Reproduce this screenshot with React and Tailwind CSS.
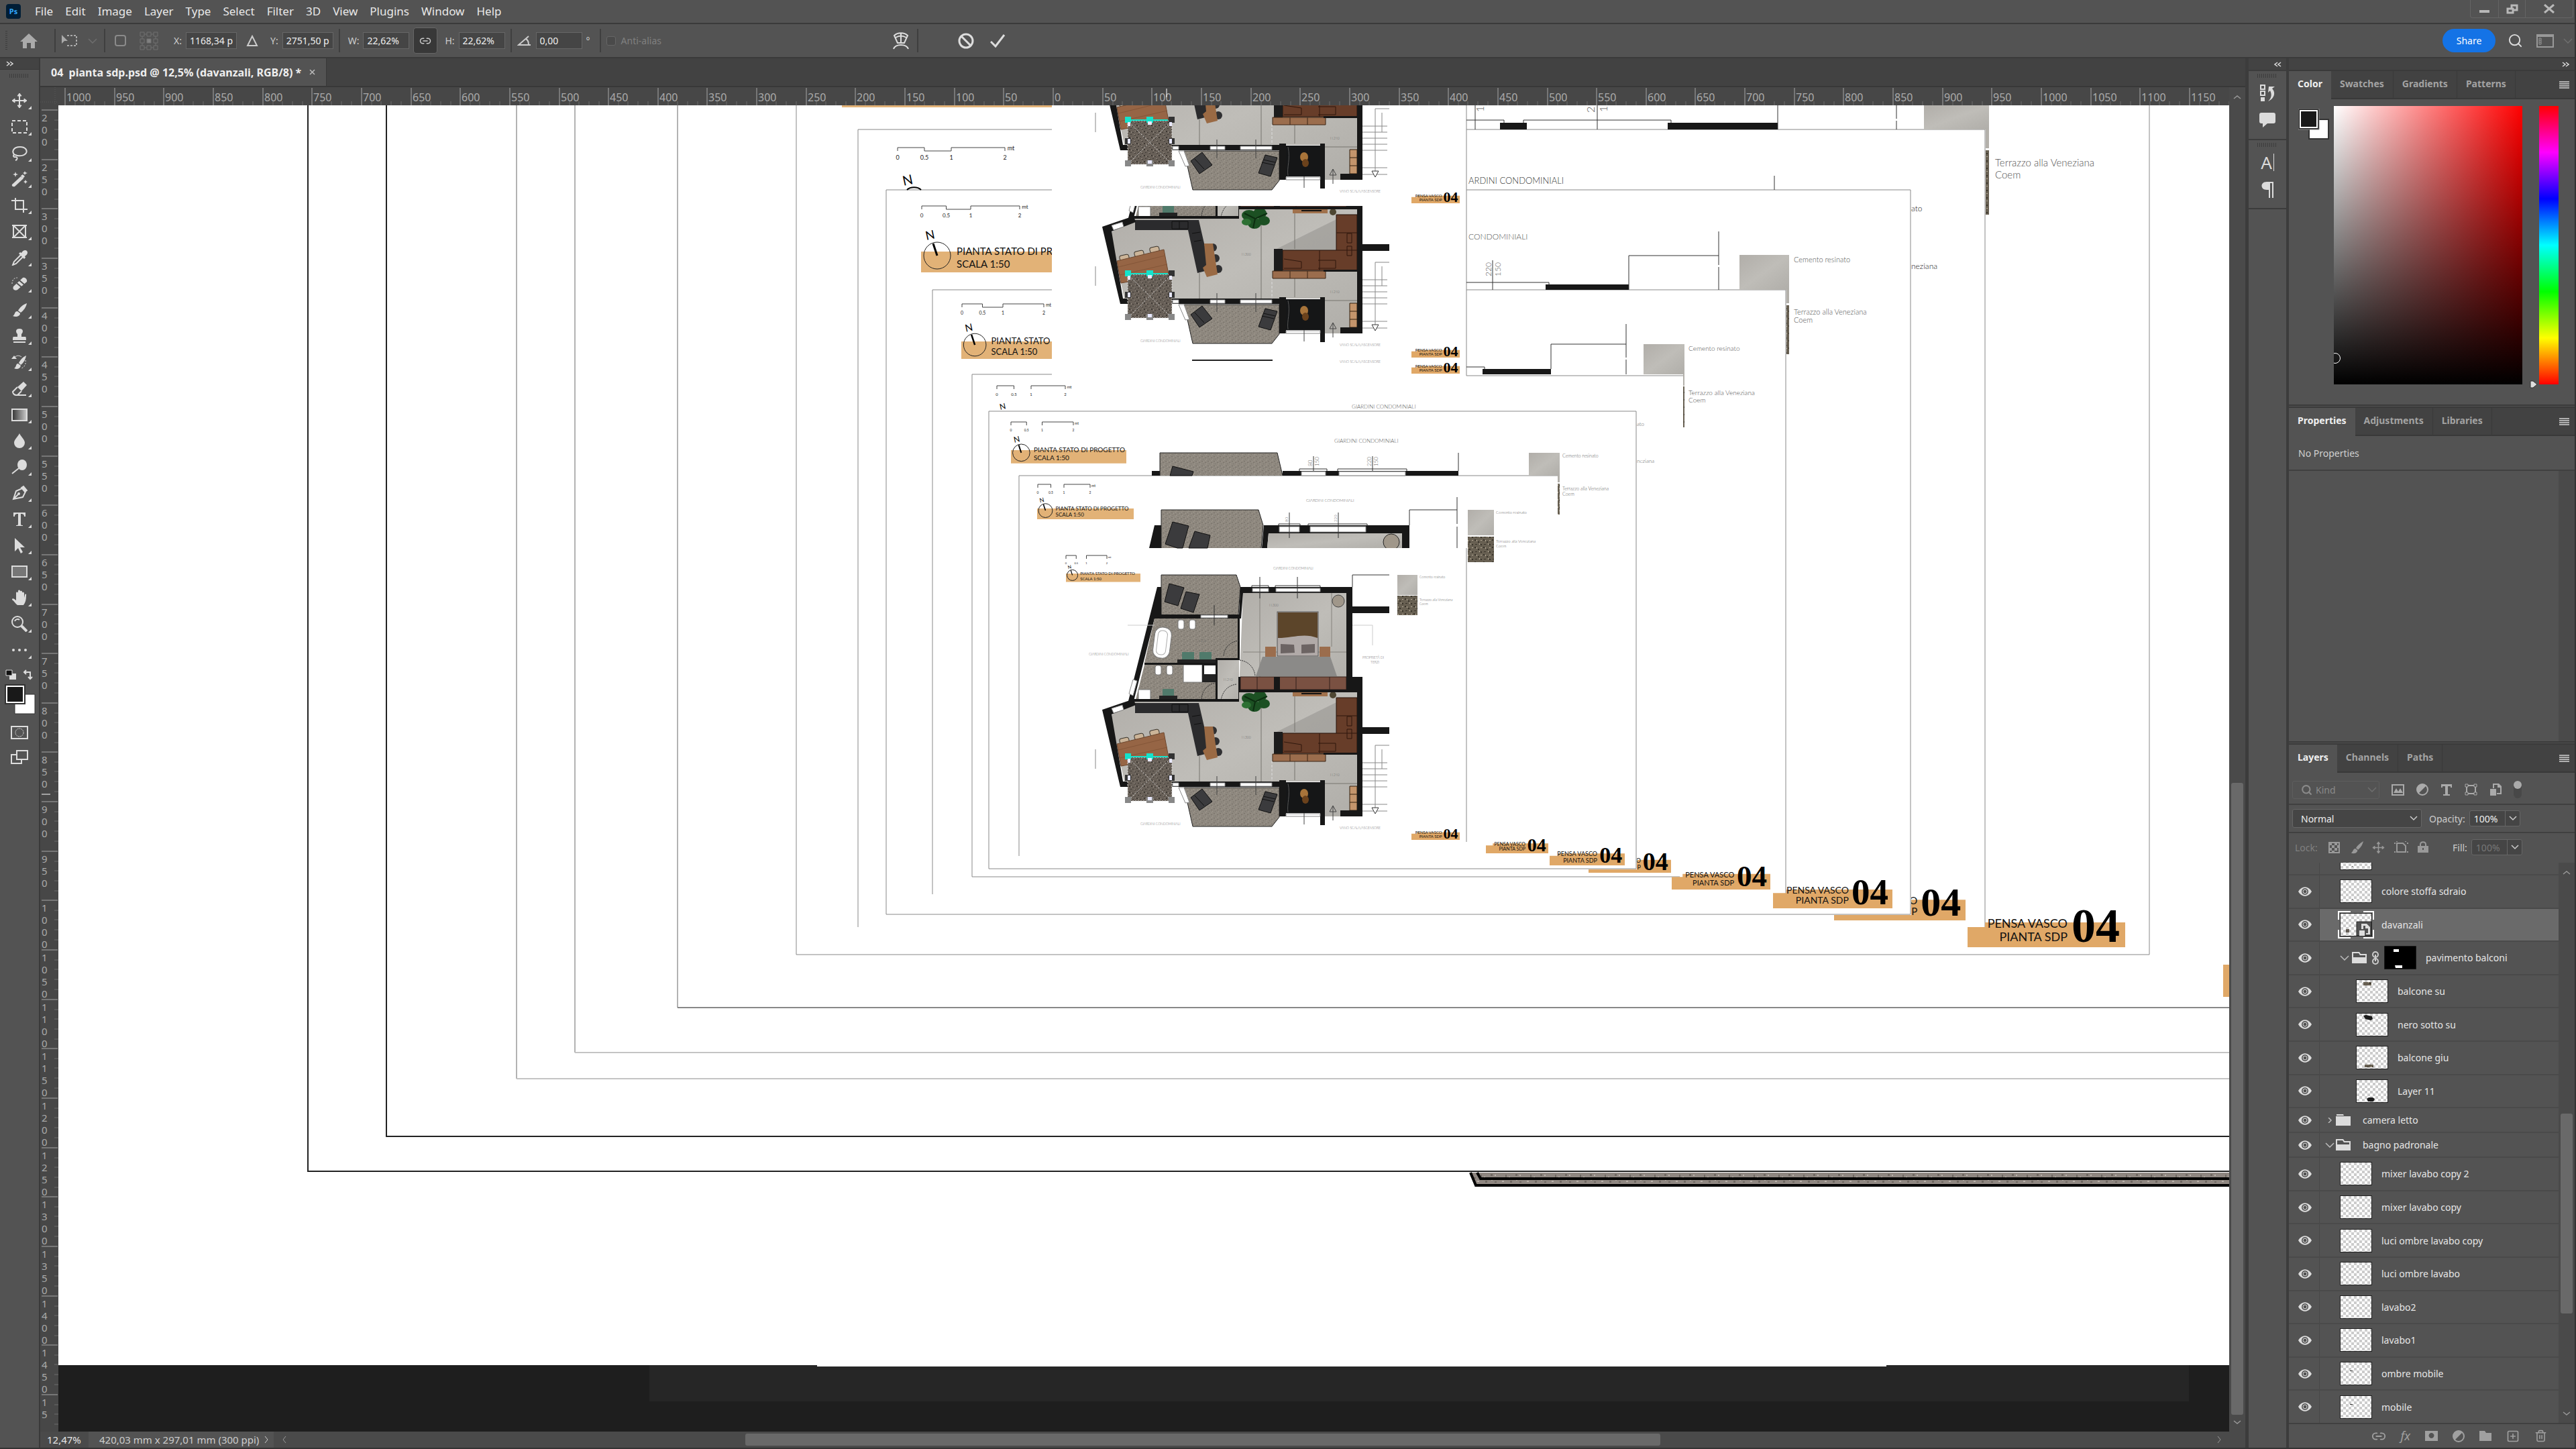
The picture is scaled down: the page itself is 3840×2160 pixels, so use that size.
import React from 'react';
import { Search, Link2, Trash2, SquarePlus } from 'lucide-react';

const MENUS = ['File', 'Edit', 'Image', 'Layer', 'Type', 'Select', 'Filter', '3D', 'View', 'Plugins', 'Window', 'Help'];

const TOOLS = [
  ['Move', <g key="i" fill="none" stroke="currentColor" strokeWidth="2"><path d="M12 3v18M3 12h18" /><path fill="currentColor" strokeWidth="1" d="M12 1l3 4H9zM12 23l3-4H9zM1 12l4-3v6zM23 12l-4-3v6z" /></g>],
  ['Marquee', <rect key="i" x="1" y="3" width="22" height="18" fill="none" stroke="currentColor" strokeWidth="2" strokeDasharray="5 3" />],
  ['Lasso', <path key="i" fill="none" stroke="currentColor" strokeWidth="2" d="M5 15C0 11 2 3 13 3c8 0 11 5 9 9-3 5-12 5-16 3-4-2-4 4 0 3 4 0 3 4 0 5" />],
  ['Object Selection', <g key="i" fill="currentColor"><path d="M1 20L14 8l4 3L5 23c-3 1-5-1-4-3z" /><path d="M14 7l3-2 3 3-3 3zM6 1l1 3 3 1-3 1-1 3-1-3-3-1 3-1zM20 0l1 2 3 1-3 1-1 2-1-2-2-1 2-1zM21 13l1 2 2 1-2 1-1 2-1-2-2-1 2-1z" /></g>],
  ['Crop', <path key="i" fill="none" stroke="currentColor" strokeWidth="2" d="M0 5h18v18M6 1v17h18" />],
  ['Frame', <path key="i" fill="none" stroke="currentColor" strokeWidth="2" d="M1 3h22M1 21h22M3 2v20M21 2v20M3 3l18 18M21 3L3 21" />],
  ['Eyedropper', <g key="i"><path fill="none" stroke="currentColor" strokeWidth="2" d="M14 8L4 18l-2 5 5-2 10-10" /><path fill="currentColor" d="M11 6l2-2 2 1c2-4 6-5 8-3s1 6-3 8l1 2-2 2z" /></g>],
  ['Healing Brush', <g key="i"><path fill="currentColor" d="M3 16L17 3c3-1 7 2 6 6L9 21c-4 2-8-1-6-5z" /><path stroke="#535353" strokeWidth="2" d="M8 11l7 6M12 7l7 6" /><path fill="none" stroke="currentColor" strokeDasharray="2 2" d="M1 12c0-6 3-9 8-9" /></g>],
  ['Brush', <path key="i" fill="currentColor" d="M23 2C17 4 12 9 10 13l4 3c4-3 8-8 9-14zM9 14c-5 0-3 5-7 7 4 2 11 1 11-4z" />],
  ['Clone Stamp', <path key="i" fill="currentColor" d="M12 1c-6 0-6 5-3 8v4H3c-1 0-1 4-1 5h20c0-1 0-5-1-5h-6V9c3-3 3-8-3-8zM3 20h18v2H3z" />],
  ['History Brush', <g key="i"><path fill="currentColor" d="M22 2C17 4 13 9 11 13l3 3c4-3 7-8 8-14zM10 14c-4 0-2 5-6 7 4 2 9 1 10-4zM0 7l4-5 4 5z" /><path fill="none" stroke="currentColor" d="M4 6c2-4 7-5 11-2" /><path fill="none" stroke="currentColor" strokeDasharray="2 2" d="M21 9c1 5-1 10-6 12" /></g>],
  ['Eraser', <g key="i"><path fill="currentColor" d="M9 10l9-8 5 5-8 9z" /><path fill="none" stroke="currentColor" strokeWidth="2" d="M9 10l-7 7c0 3 3 5 5 5h15M15 16l-6 6" /></g>],
  ['Gradient', <g key="i"><defs><linearGradient id="toolGradient"><stop offset="0" stopColor="#333" /><stop offset="1" stopColor="#ccc" /></linearGradient></defs><rect x="1" y="4" width="22" height="17" fill="url(#toolGradient)" stroke="currentColor" strokeWidth="2" /></g>],
  ['Blur', <path key="i" fill="currentColor" d="M12 1c2 5 8 9 8 14a8 8 0 0 1-16 0C4 10 10 6 12 1z" />],
  ['Dodge', <g key="i"><ellipse cx="16" cy="9" rx="7" ry="8" fill="currentColor" /><path stroke="currentColor" strokeWidth="2" d="M11 14L1 22" /></g>],
  ['Pen', <g key="i" fill="none" stroke="currentColor" strokeWidth="2"><path d="M3 21L7 9l9-4 5 5-4 8zM3 21l7-7" /><path fill="currentColor" d="M15 4l3-2 5 6-3 2z" /><circle cx="11" cy="13" r="1" /></g>],
  ['Type', <path key="i" fill="currentColor" d="M3 2h18v6h-2c0-3-1-4-5-4v15c0 2 1 2 3 2v1H7v-1c2 0 3 0 3-2V4C6 4 5 5 5 8H3z" />],
  ['Path Selection', <path key="i" fill="currentColor" d="M5 1v20l5-5 4 8 3-2-4-7h7z" />],
  ['Rectangle', <rect key="i" x="1" y="4" width="22" height="16" fill="#777" stroke="currentColor" strokeWidth="2" />],
  ['Hand', <path key="i" fill="currentColor" d="M9 23c-3-2-5-6-8-8 0-3 3-2 6 1V5c0-2 3-2 3 0V2c0-2 3-2 3 0v1c0-2 3-1 3 0v2c0-2 3-1 3 0v7l1-4c0-2 3-2 2 1 0 6-1 10-4 14z" />],
  ['Zoom', <g key="i" fill="none" stroke="currentColor" strokeWidth="2"><circle cx="9" cy="9" r="8" /><path d="M5 8c1-3 5-4 7-2" /><path strokeWidth="4" d="M15 15l8 8" /></g>],
  ['Edit Toolbar', <g key="i" fill="currentColor"><circle cx="3" cy="12" r="2" /><circle cx="12" cy="12" r="2" /><circle cx="21" cy="12" r="2" /></g>],
];

const LAYERS = [
  { name: 'metallo', partial: true, mark: 'dot' },
  { name: 'colore stoffa sdraio', mark: 'dot' },
  { name: 'davanzali', active: true, mark: 'smart' },
  { name: 'pavimento balconi', mask: true },
  { name: 'balcone su', nested: true, mark: 'stoneTop' },
  { name: 'nero sotto su', nested: true, mark: 'blackTop' },
  { name: 'balcone giu', nested: true, mark: 'stoneBottom' },
  { name: 'Layer 11', nested: true, mark: 'blackBottom' },
  { name: 'camera letto', folder: 'closed' },
  { name: 'bagno padronale', folder: 'open' },
  { name: 'mixer lavabo copy 2' },
  { name: 'mixer lavabo copy' },
  { name: 'luci ombre lavabo copy' },
  { name: 'luci ombre lavabo' },
  { name: 'lavabo2' },
  { name: 'lavabo1' },
  { name: 'ombre mobile', mark: 'dash' },
  { name: 'mobile', mark: 'dash' },
];

const RULER_STEP = 73.65;

function Chevron({ d = 'M1 1l6 6 6-6', className = '' }) {
  return (
    <svg width="14" height="8" viewBox="0 0 14 8" className={className} fill="none" stroke="currentColor" strokeWidth="1.5">
      <path d={d} />
    </svg>
  );
}

function Gripper() {
  return <div className="h-[6px] w-[30px] bg-[repeating-linear-gradient(to_right,#3c3c3c_0_1px,transparent_1px_3px)]" />;
}

function Divider() {
  return <div className="h-[35px] w-[2px] shrink-0 bg-[#3f3f3f]" />;
}

function MenuBar() {
  return (
    <header className="flex h-[36px] shrink-0 items-center border-b-2 border-[#3a3a3a]">
      <span className="ml-[9px] flex h-[22px] w-[22px] items-center justify-center rounded-[4px] bg-[#001e36] text-[11px] font-bold text-[#31a8ff]">Ps</span>
      <nav className="ml-[21px] flex flex-1 gap-[18px] text-[17px] text-[#e8e8e8]">
        {MENUS.map((m) => <button key={m} type="button">{m}</button>)}
      </nav>
      <div className="mr-[2px] flex h-[27px] self-start rounded-b border border-t-0 border-[#646464] text-[#b8b8b8]">
        <button type="button" aria-label="Minimize" className="flex w-[42px] items-center justify-center border-r border-[#646464]">
          <span className="mt-[8px] h-[4px] w-[15px] bg-current" />
        </button>
        <button type="button" aria-label="Restore" className="flex w-[40px] items-center justify-center border-r border-[#646464]">
          <svg width="18" height="15" fill="none" stroke="currentColor" strokeWidth="3"><path d="M8 6V2h8v7h-5M2 7h8v6H2z" /></svg>
        </button>
        <button type="button" aria-label="Close" className="flex w-[70px] items-center justify-center">
          <svg width="16" height="14" stroke="currentColor" strokeWidth="3"><path d="M1 1l14 12M15 1L1 13" /></svg>
        </button>
      </div>
    </header>
  );
}

function Field({ label, value, width }) {
  return (
    <label className="flex items-center gap-[6px]">
      {label}
      <input defaultValue={value} className={`h-[25px] border border-[#666] bg-[#454545] px-[5px] text-[14px] text-[#eee] ${width}`} />
    </label>
  );
}

function OptionsBar() {
  return (
    <div className="flex h-[51px] shrink-0 items-center border-b-2 border-[#3a3a3a] text-[14px] text-[#ccc]">
      <div className="ml-[8px] h-[30px] w-[3px] bg-[repeating-linear-gradient(to_bottom,#3c3c3c_0_1px,transparent_1px_3px)]" />
      <button type="button" aria-label="Home" className="mr-[25px] ml-[19px] text-[#aaa]">
        <svg width="26" height="22" fill="currentColor"><path d="M13 0l13 12h-4v10h-6v-8h-6v8H4V12H0z" /></svg>
      </button>
      <Divider />
      <svg width="25" height="20" className="ml-[9px]" fill="none" stroke="#aaa" strokeWidth="2"><path d="M8 2h14v15H6" strokeDasharray="3 2" /><path fill="#aaa" stroke="none" d="M0 1l9 9H4l-4 4z" /></svg>
      <Chevron className="mr-[10px] ml-[14px] text-[#6e6e6e]" />
      <Divider />
      <input type="checkbox" aria-label="Toggle reference point" className="mr-[20px] ml-[14px] h-[17px] w-[17px] appearance-none rounded-[4px] border-2 border-[#8a8a8a]" />
      <svg width="28" height="28" className="mr-[23px]" fill="none" stroke="#707070">
        <path d="M1 1h6v6H1zM11 1h6v6h-6zM21 1h6v6h-6zM1 11h6v6H1zM21 11h6v6h-6zM1 21h6v6H1zM11 21h6v6h-6zM21 21h6v6h-6zM7 4h4M17 4h4M7 24h4M17 24h4M4 7v4M4 17v4M24 7v4M24 17v4" />
        <path fill="#808080" d="M11 11h6v6h-6z" />
      </svg>
      <Field label="X:" value="1168,34 p" width="w-[76px]" />
      <svg width="18" height="17" className="mr-[18px] ml-[14px]" fill="none" stroke="#ccc" strokeWidth="2"><path d="M9 2l7 14H2z" /></svg>
      <Field label="Y:" value="2751,50 p" width="w-[76px]" />
      <div className="mr-[12px] ml-[8px]"><Divider /></div>
      <Field label="W:" value="22,62%" width="w-[69px]" />
      <button type="button" aria-label="Link" className="mr-[11px] ml-[6px] flex h-[39px] w-[36px] items-center justify-center rounded border border-[#666] bg-[#383838]"><Link2 size={18} /></button>
      <Field label="H:" value="22,62%" width="w-[69px]" />
      <div className="mr-[8px] ml-[8px]"><Divider /></div>
      <Field label={<svg width="22" height="16" fill="none" stroke="#ccc" strokeWidth="2"><path d="M17 1L2 14h18M13 5c4 2 4 6 4 9" /></svg>} value="0,00" width="w-[69px]" />
      <span className="mr-[14px] ml-[6px]">°</span>
      <Divider />
      <label className="ml-[8px] flex items-center gap-[8px] text-[#808080]">
        <input type="checkbox" className="h-[14px] w-[14px] appearance-none rounded-[3px] border border-[#666] bg-[#4a4a4a]" />
        Anti-alias
      </label>
      <svg width="24" height="26" className="mr-[12px] ml-[345px]" fill="none" stroke="#ddd" strokeWidth="2"><path d="M7 16L2 5c5-5 15-5 20 0l-5 11zM12 1v15M4 8c5-3 11-3 16 0M1 25c3-8 19-8 22 0" /></svg>
      <Divider />
      <button type="button" aria-label="Cancel transform" className="ml-[59px]">
        <svg width="24" height="24" fill="none" stroke="#ddd" strokeWidth="3"><circle cx="12" cy="12" r="10" /><path d="M5 5l14 14" /></svg>
      </button>
      <button type="button" aria-label="Commit transform" className="ml-[24px]">
        <svg width="23" height="20" fill="none" stroke="#ddd" strokeWidth="3"><path d="M1 11l7 7L21 1" /></svg>
      </button>
      <button type="button" className="ml-auto h-[35px] w-[79px] rounded-full bg-[#1473e6] text-white">Share</button>
      <button type="button" aria-label="Search" className="ml-[18px] text-[#ddd]"><Search size={23} /></button>
      <svg width="26" height="20" className="ml-[20px]" fill="none" stroke="#999" strokeWidth="2"><path d="M1 1h24v18H1zM1 3h24" /><path strokeWidth="1" d="M4 6h3v9H4zM4 9h3M4 12h3" /></svg>
      <Chevron className="mr-[3px] ml-[14px] text-[#6e6e6e]" />
    </div>
  );
}

function Toolbar() {
  return (
    <aside className="flex w-[60px] shrink-0 flex-col border-r-2 border-[#3a3a3a] text-[#dcdcdc]">
      <div className="flex h-[17px] items-center border-b border-[#3a3a3a] bg-[#434343] pl-[9px]">
        <svg width="11" height="8" fill="none" stroke="currentColor" strokeWidth="1.5"><path d="M1 1l4 3-4 3M6 1l4 3-4 3" /></svg>
      </div>
      <div className="flex h-[26px] items-start justify-center pt-[6px]"><Gripper /></div>
      {TOOLS.map(([name, icon]) => (
        <button key={name} type="button" aria-label={name} className="flex h-[39px] items-center justify-center gap-[1px] pl-[6px]">
          <svg width="24" height="24" viewBox="0 0 24 24">{icon}</svg>
          <svg width="5" height="5" className="mt-[22px]" fill="currentColor"><path d="M5 0v5H0z" /></svg>
        </button>
      ))}
      <div className="flex h-[32px] items-center justify-between px-[8px] pt-[4px]">
        <svg width="17" height="16"><path fill="#ddd" d="M6 6h10v9H6z" /><path fill="#111" stroke="#ddd" d="M1 1h9v8H1z" /></svg>
        <svg width="16" height="16" fill="none" stroke="currentColor" strokeWidth="2"><path d="M2 4h9v10M5 1L2 4l3 3M8 11l3 3 3-3" /></svg>
      </div>
      <svg width="46" height="46" className="ml-[7px] shrink-0">
        <path fill="#fff" stroke="#333" d="M15 15h30v29H15z" />
        <path fill="#333" d="M0 0h31v30H0z" />
        <path fill="#191919" stroke="#fff" strokeWidth="2" d="M3 3h25v24H3z" />
      </svg>
      <button type="button" aria-label="Quick Mask" className="flex h-[46px] items-center justify-center pt-[6px]">
        <svg width="26" height="20" fill="none" stroke="currentColor" strokeWidth="2"><path d="M1 1h24v18H1z" /><circle cx="13" cy="10" r="6" strokeWidth="1" strokeDasharray="2 1" /></svg>
      </button>
      <button type="button" aria-label="Screen Mode" className="flex h-[33px] items-center justify-center">
        <svg width="26" height="22" fill="none" stroke="currentColor" strokeWidth="2"><path d="M9 1h16v13H9zM9 7H1v13h15v-6" /></svg>
      </button>
    </aside>
  );
}

function HorizontalRuler() {
  const marks = Array.from({ length: 44 }, (_, i) => i);
  return (
    <svg width="100%" height="27" className="block bg-[#474747]" fontSize="16" fill="#aaa">
      {marks.map((i) => {
        const x = Math.round(10 + i * RULER_STEP);
        return (
          <g key={i}>
            <path stroke="#777" strokeWidth="2" d={`M${x} 1v26`} />
            <path stroke="#6c6c6c" strokeWidth="1" d={`M${x + 15} 21v6M${x + 29} 21v6M${x + 44} 21v6M${x + 59} 21v6`} />
            <text x={x + 2} y="21">{Math.abs(1000 - i * 50)}</text>
          </g>
        );
      })}
      <path stroke="#fff" d="M1652 2v13" />
    </svg>
  );
}

function VerticalRuler() {
  const marks = Array.from({ length: 27 }, (_, i) => i);
  return (
    <svg width="27" height="100%" className="block shrink-0 bg-[#474747]" fontSize="15" fill="#aaa">
      <path fill="none" stroke="#5a5a5a" strokeDasharray="1 2" d="M0 22h27M22 0v27" />
      {marks.map((i) => {
        const y = Math.round(34 + i * RULER_STEP);
        const digits = String(200 + i * 50).split('').filter((_, n) => y + 17 + n * 18 < 2000);
        return (
          <g key={i}>
            <path stroke="#777" strokeWidth="2" d={`M2 ${y}h24`} />
            <path stroke="#6c6c6c" strokeWidth="1" d={`M21 ${y + 15}h6M21 ${y + 29}h6M21 ${y + 44}h6M21 ${y + 59}h6`} />
            {digits.map((c, n) => <text key={n} x="2" y={y + 17 + n * 18}>{c}</text>)}
          </g>
        );
      })}
      <path stroke="#fff" d="M2 1054h13" />
    </svg>
  );
}

// Title block with the sheet number, right and bottom are its far edges
function SheetTag({ right, bottom, width, lines = ['PENSA VASCO', 'PIANTA SDP'] }) {
  const k = width / 235;
  const small = Math.max(5, Math.round(18 * k));
  return (
    <g>
      <path fill="#e0a867" d={`M${right - width} ${bottom - 30 * k}H${right - width + 26 * k}V${bottom - 37 * k}H${right}V${bottom}H${right - width}z`} />
      <g textAnchor="end" fontFamily="Lato" fontSize={small} fill="#111">
        <text x={right - 86 * k} y={bottom - 29 * k}>{lines[0]}</text>
        <text x={right - 86 * k} y={bottom - 9 * k}>{lines[1]}</text>
      </g>
      <text x={right - 8 * k} y={bottom - 8 * k} textAnchor="end" fontFamily="Liberation Serif" fontWeight="700" fontSize={Math.round(72 * k)}>04</text>
    </g>
  );
}

function North({ x, y, size }) {
  return <text transform={`translate(${x} ${y}) rotate(-12)`} fontFamily="Lato" fontSize={size}>N</text>;
}

function PlanTitle({ x, y, width, k, size }) {
  return (
    <g>
      <path fill="#e2b277" d={`M${x} ${y}h${width}v${31 * k}h${-width}z`} />
      <circle cx={x + 24 * k} cy={y + 6 * k} r={20 * k} fill="none" stroke="#222" />
      <path stroke="#000" strokeWidth={Math.max(1, 3 * k)} d={`M${x + 24 * k} ${y + 6 * k}l${-6 * k} ${-18 * k}`} />
      <North x={x + 8 * k} y={y - 17 * k} size={Math.round(18 * k)} />
      <g fontFamily="Lato" fontSize={size} fill="#111">
        <text x={x + 53 * k} y={y + 5 * k}>PIANTA STATO DI PROGETTO</text>
        <text x={x + 53 * k} y={y + 24 * k}>SCALA 1:50</text>
      </g>
    </g>
  );
}

function ScaleBar({ x, y, width, size, gap }) {
  const q = width / 4;
  const step = gap ? `m${q} 0v-5` : `h${q}v-5`;
  return (
    <g>
      <path fill="none" stroke="#444" d={`M${x} ${y + 5}v-5h${q}v5${step}h${2 * q}v5`} />
      <g fontFamily="Lato" fontSize={size} textAnchor="middle" fill="#222">
        <text x={x} y={y + 9 + size}>0</text>
        <text x={x + q} y={y + 9 + size}>0.5</text>
        <text x={x + 2 * q} y={y + 9 + size}>1</text>
        <text x={x + 4 * q} y={y + 9 + size}>2</text>
        <text x={x + 4 * q + size} y={y + 4}>mt</text>
      </g>
    </g>
  );
}

function Legend({ x, y, w, h, cut, strip, terrazzo, end, size, textX }) {
  return (
    <g>
      <rect x={x} y={y} width={w} height={cut - y} fill="url(#concrete)" />
      <rect x={strip} y={cut} width={x + w - strip} height={h} fill="#b3b0aa" />
      <rect x={strip} y={terrazzo} width={x + w - strip} height={end - terrazzo} fill="url(#terrazzo)" />
      <g fontFamily="Lato" fontWeight="300" fontSize={size} fill="#555">
        {y > 160 && <text x={textX} y={y + size}>Cemento resinato</text>}
        <text x={textX} y={terrazzo + size + (y < 160 ? 9 : 3)}>Terrazzo alla Veneziana</text>
        <text x={textX} y={terrazzo + size * 2 + (y < 160 ? 12 : 4)}>Coem</text>
      </g>
    </g>
  );
}

function LowerPlan() {
  return (
    <g>
      <path fill="url(#concrete)" d="M1655 1067l37-21h155v-15h176v186h-48v-52h-299z" />
      <path fill="#8f8d89" opacity=".5" d="M1992 1047v46h-93z" />
      <path fill="none" stroke="#77746f" strokeWidth="1" d="M1880 1031v134M1788 1127v38M1930 1031v60M1930 1134v29M1975 1168h48" />
      <path fill="none" stroke="#ddd" strokeDasharray="4 2" d="M1896 1134v31" />
      {/* kitchen */}
      <path fill="#2b2b2d" d="M1692 1048h95l17 74-19 5-14-64h-79z" />
      <path fill="none" stroke="#111" d="M1747 1050h24v11h-24zM1758 1050v11M1777 1068l12-2M1780 1080l11-2" />
      <g fill="#303032"><ellipse cx="1808" cy="1089" rx="6" ry="6" /><ellipse cx="1812" cy="1105" rx="6" ry="6" /><ellipse cx="1816" cy="1121" rx="6" ry="6" /></g>
      <path fill="#9a6a44" d="M1795 1083h13l7 46-16 4-6-14 5-4z" />
      {/* dining table */}
      <g fill="#cbb498" stroke="#3a342c"><rect x="1669" y="1100" width="14" height="8" rx="3" transform="rotate(-12 1676 1104)" /><rect x="1691" y="1094" width="14" height="8" rx="3" transform="rotate(-12 1698 1098)" /><rect x="1714" y="1088" width="14" height="8" rx="3" transform="rotate(-12 1721 1092)" /></g>
      <path fill="#966545" stroke="#6d472e" d="M1665 1109l70-17 7 37-71 13z" />
      <path fill="none" stroke="#845638" d="M1667 1118l70-17M1669 1130l71-16" />
      {/* plant */}
      <g fill="#1c5023"><ellipse cx="1862" cy="1041" rx="11" ry="8" /><ellipse cx="1878" cy="1038" rx="10" ry="8" /><ellipse cx="1884" cy="1049" rx="9" ry="7" /><ellipse cx="1870" cy="1053" rx="10" ry="8" /><ellipse cx="1858" cy="1051" rx="7" ry="5" fill="#2d7033" /></g>
      <path stroke="#0c2d10" strokeWidth="2" d="M1855 1038l16 8 18-8M1871 1046l-3 14" fill="none" />
      {/* living room */}
      <rect x="1927" y="1031" width="52" height="7" fill="#a0714c" />
      <rect x="1940" y="1033" width="30" height="2" fill="#111" />
      <ellipse cx="1987" cy="1036" rx="5" ry="5" fill="#4e4632" />
      <path fill="#673d29" stroke="#241008" d="M1992 1040h31v83h-111v-30h80z" />
      <path fill="none" stroke="#2e170d" d="M1992 1067h31M1992 1093h31M1967 1093v30M2008 1068h7v14h-7zM2008 1087h7v14h-7zM1914 1106l26 4v10h-26M1965 1108h26v12h-26" />
      <rect x="1899" y="1091" width="13" height="33" fill="#1c1c1c" />
      <path fill="#9b6d4d" stroke="#3b2415" d="M1897 1124h79v11h-79zM1923 1124v11M1949 1124v11" />
      {/* stone balcony */}
      <path fill="url(#stone)" stroke="#222" d="M1765 1174h142v44l-11 14h-118z" />
      <path fill="#fff" stroke="#888" d="M1757 1174h8l8 22-6 1z" />
      <path fill="#3b3b3d" stroke="#111" d="M1792 1176l15 19-19 13-13-19zM1886 1180l18 4-10 28-18-5z" />
      <path fill="none" stroke="#111" d="M1781 1186l14 15M1883 1187l18 4M1881 1191l18 4" />
      {/* fireplace */}
      <rect x="1917" y="1166" width="52" height="46" fill="#151617" />
      <path stroke="#555" fill="none" d="M1920 1168c4 18-2 30 0 43" />
      <ellipse cx="1944" cy="1183" rx="6" ry="7" fill="#a8743a" />
      <ellipse cx="1946" cy="1192" rx="5" ry="6" fill="#6b421c" />
      <path fill="#c4956c" stroke="#33200f" d="M2012 1172h11v36h-11zM2012 1184h11M2012 1196h11" />
      {/* walls */}
      <g fill="#171717">
        <path d="M1643 1058l47-16 3 9-36 14 17 100h243v8h-247z" />
        <path d="M1690 1042h157v4h-157zM1847 1028h184v4h-184zM2023 1009h8v208h-33v-9h25zM1907 1163h10v54h-10zM1968 1163h7v67h-7zM1973 1122h50v3h-50zM2031 1084h40v10h-40z" />
      </g>
      <path fill="#fff" stroke="#888" d="M1804 1167h22v5h-22zM1849 1167h47v5h-47zM1748 1167h9v5h-9zM1917 1213h51v4h-51zM1657 1056l16-5 2 7-15 5z" />
      <path fill="none" stroke="#444" d="M1814 1157v28M1872 1157v28M1944 1212v17M1987 1223v-22l-5 9h10l-5-9" />
      {/* stairs */}
      <path fill="none" stroke="#888" d="M2031 1137h37M2031 1146h37M2031 1155h37M2031 1164h37M2031 1173h37M2031 1199h37M2031 1209h37M2071 1111h-21v98M2060 1117v29M1633 1117v29" />
      <path fill="#fff" stroke="#333" d="M2045 1204h10l-5 9z" />
      {/* transform box */}
      <rect x="1681" y="1129" width="66" height="65" fill="url(#darkStone)" />
      <path fill="none" stroke="#ddd" strokeDasharray="2 2" d="M1681 1129h66v65h-66zM1681 1129l66 65M1747 1129l-66 65" />
      <path stroke="#15e3cb" strokeWidth="2" d="M1681 1128h60" />
      <path fill="#15e3cb" d="M1677 1123h9v9h-9zM1709 1123h10v9h-10z" />
      <path fill="#333" d="M1742 1123h9v9h-9zM1677 1155h9v9h-9zM1742 1155h9v9h-9z" />
      <path fill="#888" d="M1677 1188h9v9h-9zM1709 1188h10v9h-10zM1742 1188h9v9h-9z" />
      <path fill="#e8e8ff" d="M1711 1130h6v5h-6zM1681 1131h4v6h-4zM1743 1131h4v6h-4zM1681 1156h4v7h-4zM1743 1156h4v7h-4zM1711 1188h6v5h-6z" />
      <g fontFamily="Lato" fontWeight="300" fontSize="5" fill="#666">
        <text x="1700" y="1230">GIARDINI CONDOMINIALI</text>
        <text x="1997" y="1236">VANO SCALA/ASCENSORE</text>
        <text x="1851" y="1101">H.300</text>
        <text x="1983" y="1157">H.240</text>
      </g>
    </g>
  );
}

function UpperPlan() {
  return (
    <g>
      <path fill="url(#stone)" stroke="#222" d="M1731 857h112l6 18-3 42h-115z" />
      <path fill="#3b3b3d" stroke="#111" d="M1743 870l22 6-9 27-20-6zM1768 882l20 4-9 27-19-6z" />
      <path fill="#171717" d="M1725 875h6v41h118v6h-128l-31 123h-8z" />
      <path fill="#fff" stroke="#888" d="M1790 917h40v4h-40zM1689 1013l6 2-6 22-6-3z" />
      {/* bathrooms */}
      <path fill="url(#stone)" d="M1721 922h126v61h-32v5h-109z" />
      <path fill="url(#stone)" d="M1706 991h109v52h-122z" />
      <g fill="#fff" stroke="#777">
        <rect x="1720" y="935" width="25" height="46" rx="11" transform="rotate(7 1732 958)" />
        <rect x="1756" y="924" width="9" height="14" rx="3" /><rect x="1773" y="924" width="9" height="14" rx="3" />
        <rect x="1722" y="992" width="9" height="14" rx="3" /><rect x="1739" y="992" width="9" height="14" rx="3" />
        <rect x="1764" y="991" width="28" height="26" /><rect x="1697" y="1028" width="18" height="15" />
      </g>
      <rect x="1725" y="940" width="14" height="36" rx="6" fill="none" stroke="#aaa" transform="rotate(7 1732 958)" />
      <path fill="#507a6b" d="M1762 972h18v11h-18zM1788 972h18v11h-18zM1733 1027h17v10h-17z" />
      <path fill="#222" d="M1755 983h60v5h-60zM1728 1037h27v6h-27zM1792 991h23v26h-23z" />
      <rect x="1795" y="992" width="17" height="13" fill="#fff" />
      <path fill="url(#concrete)" d="M1815 983h32v62h-32z" />
      {/* bedroom */}
      <path fill="url(#concrete)" d="M1853 884h154v144h-160z" />
      <path fill="none" stroke="#85827d" d="M1878 884v125M1985 884v80M1853 972h154" />
      <path fill="#8b8a88" d="M1882 979h101l10 29h-121z" />
      <circle cx="1995" cy="896" r="9" fill="#a0978a" stroke="#444" />
      <path fill="#9b6d4d" d="M1886 964h16v15h-16zM1967 964h16v15h-16z" />
      <rect x="1904" y="912" width="61" height="66" fill="#b1aaa8" stroke="#555" />
      <path fill="#5c452a" d="M1905 913h59v38c-20-8-38 0-59 0z" />
      <path fill="#6c6463" d="M1909 960l20 1 1 12-21 1zM1940 961l20-1v13l-20 1z" />
      <path fill="#7a5142" stroke="#33201a" d="M1849 1009h158v19h-158zM1874 1009v19M1932 1009v19M1982 1009v19" />
      <rect x="1899" y="1009" width="9" height="19" fill="#171717" />
      <g fill="#171717">
        <path d="M1849 875h167v153h-9v-144h-154l-3 38h-3v-5zM1845 916h3v68h-33v62h-3v-65h33zM1706 988h109v3h-109zM1846 1009h3v37h-3zM2016 904h55v10h-55zM2007 1009h24v23h-8v-4h-16z" />
      </g>
      <path fill="#fff" stroke="#888" d="M1867 877h24v5h-24zM1902 877h66v5h-66z" />
      <path fill="none" stroke="#333" d="M1878 860v32M1934 860v32M2016 875v-18h55M1810 902v30M1866 875v-2h25v2M1901 875v-2h67v2" />
      <path fill="none" stroke="#ccc" d="M1681 932h40M2016 932h30v30" />
      <path fill="none" stroke="#333" strokeDasharray="2 1" d="M1847 955c-16 2-22 12-23 23M1848 984c14 2 22 12 23 24M1813 1018c-14 2-21 12-22 24M1843 1020c-14 2-21 12-23 24" />
      <g fontFamily="Lato" fontWeight="300" fontSize="5" fill="#666">
        <text x="1623" y="977">GIARDINI CONDOMINIALI</text>
        <text x="2031" y="982">PROPRIETÀ DI</text>
        <text x="2043" y="989">TERZI</text>
        <text x="1892" y="904">H.300</text>
        <text x="1784" y="957">H.240</text>
        <text x="1824" y="1015">H.240</text>
      </g>
    </g>
  );
}

function Artwork() {
  return (
    <svg width="100%" height="100%" className="block bg-[#1e1e1e]">
      <defs>
        <linearGradient id="concrete" x1="0" y1="0" x2="1" y2="1">
          <stop offset="0" stopColor="#b1aea9" /><stop offset=".5" stopColor="#bfbdb8" /><stop offset="1" stopColor="#b0aea9" />
        </linearGradient>
        <pattern id="stone" width="9" height="7" patternUnits="userSpaceOnUse">
          <rect width="9" height="7" fill="#8e887f" />
          <path fill="#7a736a" d="M0 1h2v1H0zM5 3h2v1H5zM2 5h1v1H2z" /><path fill="#a89f93" d="M3 2h1v1H3zM7 5h1v1H7zM6 0h1v1H6z" />
        </pattern>
        <pattern id="darkStone" width="11" height="9" patternUnits="userSpaceOnUse">
          <rect width="11" height="9" fill="#686058" />
          <path fill="#3f3a35" d="M0 1h2v2H0zM5 3h2v1H5zM2 6h2v1H2zM8 7h2v1H8z" /><path fill="#938a80" d="M3 2h1v2H3zM7 6h2v1H7zM9 1h1v1H9z" />
        </pattern>
        <pattern id="sill" width="37" height="18" patternUnits="userSpaceOnUse" y="1748">
          <rect width="37" height="18" fill="#8f8781" />
          <path fill="#6f6862" d="M2 2h3v3H2zM13 7h4v2h-4zM24 3h2v4h-2zM31 12h3v3h-3zM8 13h3v2H8z" /><path fill="#b9b1aa" d="M8 3h2v2H8zM19 12h3v2h-3zM29 6h2v2h-2zM3 10h2v2H3z" />
        </pattern>
        <pattern id="terrazzo" width="13" height="11" patternUnits="userSpaceOnUse">
          <rect width="13" height="11" fill="#686052" />
          <path fill="#39342b" d="M1 1h2v2H1zM6 4h2v2H6zM2 8h3v1H2zM10 8h2v2h-2z" /><path fill="#b7ac99" d="M4 2h1v2H4zM8 7h1v2H8zM10 2h2v1h-2z" />
        </pattern>
        <clipPath id="titleClip"><path d="M1187 157h381v420h-381z" /></clipPath>
        <clipPath id="topCopy"><path d="M1600 157h480v148h-480z" /></clipPath>
        <clipPath id="middleCopy"><path d="M1600 307h480v234h-480z" /></clipPath>
        <clipPath id="tagSeven"><path d="M2849 1300h90v72h-206v-8h116z" /></clipPath>
        <clipPath id="tagFour"><path d="M2440 1260h60v41h-132v-5h72z" /></clipPath>
        <g id="lowerPlan"><LowerPlan /></g>
        <g id="upperPlan"><UpperPlan /></g>
      </defs>

      {/* the drawing is laid out in screen coordinates */}
      <g transform="translate(-87 -157)">
        <path fill="#262626" d="M968 2035h2295v54H968z" />
        <path fill="#fff" d="M0 0h3840v2035H0z" />

        {/* nested sheet frames */}
        <g fill="none">
          <path stroke="#222" strokeWidth="2" d="M459 157v1589h2900M576 157v1537h2800" />
          <path stroke="#666" d="M770 157v1451M857 157v1412" />
          <path stroke="#c4c4c4" strokeWidth="2" d="M770 1608h2600M857 1569h2600" />
          <path stroke="#888" strokeWidth="2" d="M1010 1502h2400" />
          <path stroke="#666" d="M1010 157v1345" />
          <path stroke="#888" d="M1187 157v1266h2017V157M1568 193h-289v1189M1568 283h-247v1080h1527V283h-662M1568 432h-178v901M1568 558h-119v749h1055M1474 1295V613h965v682zM1519 1276V709h804M2186 157v403h324M2186 193h773v1190M2186 432h476v901M2186 817v438" />
        </g>

        {/* partial plans between the frames */}
        <path fill="#171717" d="M2236 183h40v10h-40zM2486 183h164v10h-164zM2304 424h124v8h-124zM2210 550h102v8h-102zM1717 702h12v7h-12zM1912 702h262v7h-262z" />
        <path fill="none" stroke="#333" d="M2186 179h56v4M2271 183v-4h220v4M2199 157v36M2381 157v36M2650 157v36M2827 157v20M2827 180v13M2645 262v21M2186 421h123v3M2225 388v44M2428 432v-51h134M2562 345v50M2562 398v34M2186 547h27v3M2312 550v-37h112M2424 483v50M2424 536v22M2174 702v-27M1937 702v-3h41v3M1994 702v-3h103v3M1958 680v29M2046 680v29" />
        <path fill="#fff" stroke="#888" d="M1940 703h36v6h-36zM1996 703h99v6h-99z" />
        <path fill="url(#stone)" stroke="#222" d="M1729 709v-34h175l8 34" />
        <path fill="#3b3b3d" stroke="#111" d="M1744 709l4-14 31 8-2 6z" />
        <path fill="#171717" d="M1721 783h10v34h-18zM1884 783h217v34h-11v-22h-199l-2 22h-8z" />
        <path fill="url(#concrete)" d="M1891 795h199v22h-201z" />
        <circle cx="2074" cy="808" r="12" fill="#a0978a" stroke="#222" />
        <path fill="#fff" d="M2060 817h30v6h-30z" />
        <path fill="url(#stone)" stroke="#222" d="M1731 817v-57h145l7 23-3 34" />
        <path fill="#3b3b3d" stroke="#111" d="M1748 778l24 6-9 33h-8l-18-6zM1781 792l23 6-4 19h-28z" />
        <path fill="#fff" stroke="#888" d="M1907 785h30v8h-30zM1953 785h83v8h-83z" />
        <path fill="none" stroke="#333" d="M2101 783v-23h71M2172 741v40M2172 785v32M1906 783v-2h32v2M1950 783v-2h88v2M1922 764v38M1995 764v38" />

        <g clipPath="url(#titleClip)">
          <path fill="#e2b277" d="M1255 157h313v3h-313z" />
          <PlanTitle x={1373} y={375} width={195} k={1} size={15} />
          <PlanTitle x={1433} y={509} width={135} k={0.84} size={13} />
        </g>
        <PlanTitle x={1507} y={671} width={172} k={0.64} size={10} />
        <PlanTitle x={1546} y={758} width={144} k={0.52} size={8} />
        <PlanTitle x={1589} y={855} width={111} k={0.4} size={6} />
        <North x={1347} y={277} size={20} />
        <path fill="none" stroke="#000" strokeWidth="2" d="M1352 283c5-5 16-5 21 0" />
        <North x={1491} y={611} size={12} />

        <ScaleBar x={1338} y={220} width={160} size={9} />
        <ScaleBar x={1374} y={307} width={146} size={8} />
        <ScaleBar x={1434} y={453} width={122} size={7} />
        <ScaleBar x={1486} y={575} width={102} size={6} gap />
        <ScaleBar x={1507} y={629} width={93} size={5} gap />
        <ScaleBar x={1547} y={722} width={78} size={5} gap />
        <ScaleBar x={1589} y={828} width={61} size={4} gap />

        <Legend x={2868} y={157} w={97} h={28} cut={193} strip={2960} terrazzo={224} end={320} size={15} textX={2974} />
        <Legend x={2593} y={380} w={74} h={20} cut={432} strip={2663} terrazzo={455} end={528} size={11} textX={2674} />
        <Legend x={2450} y={513} w={61} h={17} cut={558} strip={2509} terrazzo={576} end={637} size={10} textX={2517} />
        <Legend x={2279} y={675} w={46} h={10} cut={709} strip={2322} terrazzo={721} end={767} size={7} textX={2329} />
        <Legend x={2188} y={760} w={39} h={0} cut={798} strip={2188} terrazzo={800} end={838} size={6} textX={2230} />
        <Legend x={2083} y={857} w={30} h={0} cut={887} strip={2083} terrazzo={888} end={917} size={5} textX={2116} />

        <g fontFamily="Lato" fontWeight="300" fill="#555">
          <g fontSize="13">
            <text x="2189" y="274" fill="#333">ARDINI CONDOMINIALI</text>
          </g>
          <g fontSize="12">
            <text x="2189" y="357">CONDOMINIALI</text>
            <text x="2849" y="315" fill="#222">ato</text>
            <text x="2849" y="401" fill="#222">neziana</text>
            <text transform="translate(2223 412) rotate(-90)">220</text>
            <text transform="translate(2237 412) rotate(-90)">150</text>
          </g>
          <g fontSize="16">
            <text transform="translate(2212 167) rotate(-90)">1</text>
            <text transform="translate(2377 168) rotate(-90)">2</text>
            <text transform="translate(2396 167) rotate(-90)">1</text>
          </g>
          <g fontSize="8">
            <text x="2015" y="609">GIARDINI CONDOMINIALI</text>
            <text x="1989" y="660">GIARDINI CONDOMINIALI</text>
            <text x="2440" y="635">ato</text>
            <text x="2440" y="690">neziana</text>
            <text transform="translate(1956 695) rotate(-90)">80</text>
            <text transform="translate(1966 695) rotate(-90)">150</text>
            <text transform="translate(2044 695) rotate(-90)">220</text>
            <text transform="translate(2054 695) rotate(-90)">150</text>
          </g>
          <g fontSize="6">
            <text x="1947" y="748">GIARDINI CONDOMINIALI</text>
            <text transform="translate(1920 778) rotate(-90)">80</text>
            <text transform="translate(1993 778) rotate(-90)">220</text>
          </g>
          <text x="1898" y="849" fontSize="5">GIARDINI CONDOMINIALI</text>
        </g>

        {/* floor plan and its clipped repeats */}
        <use href="#upperPlan" />
        <use href="#lowerPlan" />
        <g clipPath="url(#middleCopy)">
          <use href="#upperPlan" y="-720" />
          <use href="#lowerPlan" y="-720" />
        </g>
        <g clipPath="url(#topCopy)"><use href="#lowerPlan" y="-949" /></g>
        <path stroke="#222" strokeWidth="2" d="M1777 537h120" />
        <text x="1997" y="541" fontFamily="Lato" fontWeight="300" fontSize="5" fill="#666">VANO SCALA/ASCENSORE</text>

        {[303, 533, 557, 1252].map((b) => <SheetTag key={b} right={2176} bottom={b} width={72} />)}
        <SheetTag right={2308} bottom={1272} width={93} />
        <SheetTag right={2422} bottom={1290} width={112} />
        <g clipPath="url(#tagFour)"><SheetTag right={2491} bottom={1301} width={123} lines={['O', 'P']} /></g>
        <SheetTag right={2639} bottom={1326} width={147} />
        <SheetTag right={2821} bottom={1354} width={178} />
        <g clipPath="url(#tagSeven)"><SheetTag right={2930} bottom={1372} width={196} lines={['O', 'P']} /></g>
        <SheetTag right={3168} bottom={1412} width={235} />
        <path fill="#e0a867" d="M3314 1438h20v48h-20z" />

        {/* stone sill */}
        <path fill="url(#sill)" d="M2191 1748h1140v21H2199z" />
        <path fill="none" stroke="#000" strokeWidth="4" d="M2192 1748l8 19h1140M2202 1748l5 9h1140" />
        <path stroke="#fff" strokeWidth="2" d="M1218 2036h1594" />
      </g>
    </svg>
  );
}

function Document() {
  return (
    <main className="flex min-w-0 flex-1 flex-col">
      <div className="flex h-[43px] shrink-0 border-b-2 border-[#383838] bg-[#424242]">
        <button type="button" className="flex items-center gap-[12px] border-r border-[#383838] bg-[#535353] px-[16px] text-[16px] font-bold text-[#eee]">
          <span className="whitespace-pre">04  pianta sdp.psd @ 12,5% (davanzali, RGB/8) *</span>
          <svg width="9" height="9" stroke="#bbb" strokeWidth="1.5"><path d="M1 1l7 7M8 1L1 8" /></svg>
        </button>
      </div>
      <div className="flex min-h-0 flex-1">
        <VerticalRuler />
        <div className="flex min-w-0 flex-1 flex-col">
          <HorizontalRuler />
          <div className="min-h-0 flex-1"><Artwork /></div>
        </div>
        <div className="flex w-[24px] shrink-0 flex-col items-center bg-[#4a4a4a] text-[#999]">
          <Chevron d="M2 6l5-4 5 4" className="mt-[11px] shrink-0" />
          <div className="h-[1018px]" />
          <div className="w-[18px] flex-1 rounded-[3px] bg-[#696969]" />
          <Chevron d="M2 2l5 4 5-4" className="mt-[7px] mb-[10px] shrink-0" />
        </div>
      </div>
      <footer className="flex h-[24px] shrink-0 items-center bg-[#4a4a4a] text-[15px] text-[#e4e4e4]">
        <span className="w-[72px] pl-[10px]">12,47%</span>
        <span className="flex h-[24px] w-[276px] items-center justify-between bg-[#535353] pr-[8px] pl-[16px] whitespace-nowrap text-[#ccc]">
          420,03 mm x 297,01 mm (300 ppi)
          <svg width="6" height="12" fill="none" stroke="currentColor"><path d="M1 1l4 5-4 5" /></svg>
        </span>
        <svg width="6" height="12" className="ml-[13px]" fill="none" stroke="#999"><path d="M5 1L1 6l4 5" /></svg>
        <div className="ml-[684px] h-[18px] w-[1364px] rounded-[3px] bg-[#696969]" />
        <svg width="6" height="12" className="mr-[36px] ml-auto" fill="none" stroke="#999"><path d="M1 1l4 5-4 5" /></svg>
      </footer>
    </main>
  );
}

function IconStrip() {
  return (
    <aside className="flex w-[65px] shrink-0 flex-col border-l-[5px] border-r-[4px] border-[#3c3c3c] text-[#dcdcdc]">
      <div className="flex h-[17px] items-center justify-end bg-[#434343] pr-[7px]">
        <svg width="11" height="8" fill="none" stroke="currentColor" strokeWidth="1.5"><path d="M5 1L1 4l4 3M10 1L6 4l4 3" /></svg>
      </div>
      <div className="flex h-[105px] flex-col items-center gap-[16px] border-y-2 border-[#3c3c3c] pt-[4px]">
        <Gripper />
        <button type="button" aria-label="History" className="-mt-[6px]">
          <svg width="24" height="26" fill="none" stroke="currentColor" strokeWidth="2"><path d="M2 1h6v6H2zM2 10h6v6H2z" /><path fill="currentColor" d="M2 19h6v6H2zM14 3h9l-4 3c6 6 3 15-6 19 5-5 6-10 3-16l-3 3z" strokeWidth="0" /></svg>
        </button>
        <button type="button" aria-label="Comments"><svg width="24" height="22" fill="currentColor"><path d="M3 0h18c2 0 3 1 3 3v10c0 2-1 3-3 3h-9l-7 6v-6H3c-2 0-3-1-3-3V3c0-2 1-3 3-3z" /></svg></button>
      </div>
      <div className="flex h-[103px] flex-col items-center gap-[16px] border-b-2 border-[#3c3c3c] pt-[4px]">
        <Gripper />
        <button type="button" aria-label="Character" className="-mt-[6px] flex h-[26px] items-center gap-[2px] text-[26px] leading-[26px]">A<span className="h-[26px] w-[1px] bg-current" /></button>
        <button type="button" aria-label="Paragraph"><svg width="18" height="24" fill="currentColor"><path d="M8 0h10v24h-2V2h-3v22h-2V12H8C-2 12-2 0 8 0z" /></svg></button>
      </div>
    </aside>
  );
}

function PanelTabs({ tabs }) {
  return (
    <div className="flex h-[42px] shrink-0 bg-[#424242] text-[14px] font-bold">
      {tabs.map((t, i) => (
        <button key={t} type="button" className={i === 0 ? 'bg-[#535353] px-[13px] pb-[5px] text-[#f0f0f0]' : 'border-r border-b-2 border-[#393939] px-[13px] pb-[3px] text-[#a3a3a3]'}>{t}</button>
      ))}
      <div className="flex flex-1 items-center justify-end border-b-2 border-[#393939] pr-[8px]">
        <div className="h-[11px] w-[15px] bg-[repeating-linear-gradient(to_bottom,#b0b0b0_0_2px,transparent_2px_3px)]" />
      </div>
    </div>
  );
}

function ColorPanel() {
  return (
    <section className="h-[501px] shrink-0 border-y-2 border-[#3a3a3a]">
      <PanelTabs tabs={['Color', 'Swatches', 'Gradients', 'Patterns']} />
      <div className="flex pt-[10px] pr-[24px] pl-[14px]">
        <svg width="46" height="46" className="mt-[4px] mr-[7px]">
          <path fill="#fff" stroke="#333" strokeWidth="2" d="M16 16h29v29H16z" />
          <path fill="#222" stroke="#888" d="M0 0h31v31H0z" />
          <path fill="#191919" stroke="#fff" strokeWidth="2" d="M3 3h25v25H3z" />
        </svg>
        <div className="relative h-[415px] flex-1 overflow-hidden [background:linear-gradient(to_top,#000,transparent),linear-gradient(to_right,#fff,#f00)]">
          <div className="absolute bottom-[31px] -left-[6px] h-[16px] w-[16px] rounded-full border border-white" />
        </div>
        <div className="relative ml-[25px] w-[29px] [background:linear-gradient(to_bottom,#f00,#f0f,#00f,#0ff,#0f0,#ff0,#f00)]">
          <svg width="11" height="12" className="absolute -bottom-[6px] -left-[14px]"><path fill="#ddd" stroke="#333" d="M1 1h4l6 5-6 5H1z" /></svg>
        </div>
      </div>
    </section>
  );
}

function PropertiesPanel() {
  return (
    <section className="mt-[1px] flex h-[501px] shrink-0 flex-col border-y-2 border-[#3a3a3a]">
      <PanelTabs tabs={['Properties', 'Adjustments', 'Libraries']} />
      <p className="flex h-[52px] items-center border-b-2 border-[#404040] px-[14px] text-[14px] text-[#d0d0d0]">No Properties</p>
      <div className="ml-auto w-[24px] flex-1 bg-[#4a4a4a]" />
    </section>
  );
}

function Eye() {
  return (
    <svg width="20" height="14" viewBox="0 0 20 14"><path fill="#dcdcdc" d="M0 7c5-9 15-9 20 0-5 9-15 9-20 0z" /><circle cx="10" cy="7" r="5" fill="#535353" /><circle cx="10" cy="7" r="3" fill="#535353" stroke="#dcdcdc" strokeWidth="1" /></svg>
  );
}

function Folder({ open }) {
  return (
    <svg width="22" height="17" className="shrink-0" fill="#dcdcdc">
      {open ? <path fillRule="evenodd" d="M0 0h11l2 3h9v14H0zM2 2v6h18V5h-8l-2-3z" /> : <path d="M1 0h10l1 2H1zM0 3h22v14H0z" />}
    </svg>
  );
}

function Thumb({ mark }) {
  return (
    <div className="relative h-[35px] w-[48px] shrink-0 border border-[#222] [background:conic-gradient(#ccc_25%,#fff_0_50%,#ccc_0_75%,#fff_0)_0_0/8px_8px]">
      <svg width="46" height="33" className="block">
        {mark === 'dot' && <path fill="#333" d="M17 28h1v1h-1z" />}
        {mark === 'dash' && <path fill="#333" d="M14 12h4v1h-4z" />}
        {mark === 'stoneTop' && <path fill="url(#terrazzo)" d="M10 3h12v5H10z" />}
        {mark === 'stoneBottom' && <path fill="url(#terrazzo)" d="M12 27h13v4H12z" />}
        {mark === 'blackTop' && <path fill="#1c1c1c" d="M10 3l4-1 9 2 1 4-3 2-8-2z" />}
        {mark === 'blackBottom' && <path fill="#1c1c1c" d="M15 28l3-2h6l3 2-2 4h-8z" />}
        {mark === 'smart' && (
          <g>
            <path fill="url(#darkStone)" d="M8 23h5v5H8z" />
            <path fill="#535353" stroke="#222" d="M24 12h22v21H24z" />
            <path fill="#ddd" fillRule="evenodd" d="M28 25h8v8h-8zM31 15h8l5 5v11h-6v-2h3v-7h-4v-4h-3v5h-3z" />
          </g>
        )}
      </svg>
      {mark === 'smart' && (
        <svg width="54" height="41" className="absolute -top-[4px] -left-[4px]" fill="none" stroke="#fff" strokeWidth="2"><path d="M1 13V1h18M38 1h15v12M53 28v12H38M19 40H1V28" /></svg>
      )}
    </div>
  );
}

function LayerRow({ layer }) {
  const { name, folder, mask, nested, active, partial, mark } = layer;
  let height = 'min-h-0 flex-1 border-t-2';
  if (folder) height = 'h-[37px] shrink-0 border-t-2';
  if (partial) height = 'h-[17px] shrink-0 items-end overflow-hidden';
  return (
    <li className={`flex border-[#4a4a4a] ${height}`}>
      <button type="button" aria-label={`Hide ${name}`} className={`flex w-[46px] shrink-0 items-center justify-center self-stretch border-r border-[#484848] pl-[2px] ${partial ? '-mt-[32px]' : ''}`}><Eye /></button>
      <div className={`flex flex-1 items-center text-[14px] text-[#e6e6e6] ${active ? 'bg-[#6a6a6a]' : ''} ${nested ? 'pl-[54px]' : ''} ${folder ? 'pl-[8px]' : ''} ${!nested && !folder ? 'pl-[30px]' : ''} ${partial ? 'pb-[6px]' : ''}`}>
        {folder && (
          <>
            <Chevron d={folder === 'open' ? 'M1 1l6 6 6-6' : 'M5 0l4 4-4 4'} className="mr-[2px] text-[#bbb]" />
            <Folder open={folder === 'open'} />
            <span className="ml-[18px]">{name}</span>
          </>
        )}
        {mask && (
          <>
            <Chevron className="mr-[4px] text-[#bbb]" />
            <Folder open />
            <svg width="12" height="20" className="mx-[7px] shrink-0" fill="none" stroke="#ccc" strokeWidth="2"><rect x="2" y="1" width="8" height="8" rx="4" /><rect x="2" y="11" width="8" height="8" rx="4" /><path d="M6 5v10" /></svg>
            <svg width="48" height="35" className="shrink-0"><path stroke="#333" d="M0 0h48v35H0z" /><path fill="#fff" d="M14 5h8v4h-8zM16 29h11v4H17z" /></svg>
            <span className="ml-[14px]">{name}</span>
          </>
        )}
        {!folder && !mask && (
          <>
            <Thumb mark={mark} />
            <span className="ml-[14px]">{name}</span>
          </>
        )}
      </div>
    </li>
  );
}

function PercentField({ label, dim }) {
  return (
    <label className="flex items-center gap-[6px]">
      {label}
      <span className="flex h-[24px] w-[76px] items-center rounded-[3px] border border-[#666] bg-[#454545]">
        <input defaultValue="100%" className={`h-full w-[53px] border-r border-[#666] pl-[6px] ${dim ? 'text-[#777]' : 'text-[#f0f0f0]'}`} />
        <Chevron d="M2 1l5 5 5-5" className="ml-[4px]" />
      </span>
    </label>
  );
}

function AdjustIcon({ size = 18 }) {
  return <svg width={size} height={size} viewBox="0 0 18 18"><circle cx="9" cy="9" r="8" fill="none" stroke="currentColor" strokeWidth="2" /><path fill="currentColor" d="M15 3L3 15A8 8 0 0 1 15 3z" /></svg>;
}

function LayersPanel() {
  return (
    <section className="mt-[1px] flex min-h-0 flex-1 flex-col border-t-2 border-[#3a3a3a] text-[14px] text-[#ccc]">
      <PanelTabs tabs={['Layers', 'Channels', 'Paths']} />
      <div className="flex h-[48px] shrink-0 items-center border-b-2 border-[#404040] pt-[4px] pl-[5px] text-[#aaa]">
        <label className="mr-[18px] flex h-[27px] w-[130px] items-center gap-[5px] rounded-[3px] border border-[#5e5e5e] pl-[12px] text-[#8a8a8a]">
          <Search size={17} strokeWidth={3} />
          <select aria-label="Filter kind" className="flex-1 appearance-none"><option>Kind</option></select>
          <Chevron className="mr-[3px] text-[#6e6e6e]" />
        </label>
        <svg width="19" height="17" fill="none" stroke="currentColor" strokeWidth="2"><path d="M1 1h17v15H1z" /><path fill="currentColor" strokeWidth="0" d="M3 13l4-7 3 5 3-5 4 7z" /></svg>
        <span className="ml-[18px]"><AdjustIcon /></span>
        <svg width="16" height="17" className="ml-[19px]" fill="currentColor"><path d="M0 0h16v5h-2V3h-4v12h3v2H3v-2h3V3H2v2H0z" /></svg>
        <svg width="19" height="18" className="ml-[19px]" fill="none" stroke="currentColor"><path strokeWidth="2" d="M3 3h13v12H3z" /><path fill="#535353" d="M1 1h4v4H1zM14 1h4v4h-4zM1 13h4v4H1zM14 13h4v4h-4z" /></svg>
        <svg width="17" height="18" className="ml-[19px]" fill="currentColor"><path d="M0 8h9v10H0z" /><path fillRule="evenodd" d="M4 0h9l4 4v12h-7v-2h5V6h-4V2H6v5H4z" /></svg>
        <span className="ml-[18px] flex h-[26px] w-[12px] rounded-full bg-[#484848]"><span className="h-[12px] w-[12px] rounded-full bg-[#aaa]" /></span>
      </div>
      <div className="flex h-[42px] shrink-0 items-center border-b-2 border-[#404040] pl-[5px]">
        <label className="mr-[11px] flex h-[28px] w-[193px] items-center rounded-[3px] border border-[#666] bg-[#454545] pr-[4px] pl-[12px]">
          <select aria-label="Blend mode" className="flex-1 appearance-none text-[#eee]"><option>Normal</option></select>
          <Chevron d="M2 1l5 5 5-5" />
        </label>
        <PercentField label="Opacity:" />
      </div>
      <div className="mb-[2px] flex h-[42px] shrink-0 items-center pl-[9px] text-[#999]">
        <span className="w-[50px] text-[#808080]">Lock:</span>
        <svg width="17" height="17" fill="none" stroke="currentColor" strokeWidth="2"><path d="M1 1h15v15H1z" /><path fill="currentColor" strokeWidth="0" d="M1 1h4v4H1zM9 1h4v4H9zM5 5h4v4H5zM13 5h3v4h-3zM1 9h4v4H1zM9 9h4v4H9zM5 13h4v3H5z" /></svg>
        <svg width="19" height="19" viewBox="0 0 24 24" className="ml-[16px]"><path fill="currentColor" d="M24 0C17 4 12 9 10 13l4 3c4-3 8-8 10-16zM9 14c-5 0-3 5-8 8 4 2 12 1 12-5z" /></svg>
        <svg width="19" height="19" viewBox="0 0 24 24" className="ml-[13px]">{TOOLS[0][1]}</svg>
        <svg width="21" height="18" className="ml-[14px]" fill="none" stroke="currentColor" strokeWidth="2"><path d="M4 3h9l4 4v9H4zM0 3h2M19 3h2M0 16h2M19 16h2M4 0v1M17 0v1" /></svg>
        <svg width="16" height="18" className="ml-[14px]"><path fill="none" stroke="currentColor" strokeWidth="2" d="M4 8V5c0-5 8-5 8 0v3" /><path fill="currentColor" fillRule="evenodd" d="M0 7h16v10H0zM7 10v3h2v-3z" /></svg>
        <span className="ml-[36px] text-[#ccc]"><PercentField label="Fill:" dim /></span>
      </div>
      <div className="flex min-h-0 flex-1">
        <ul className="flex min-w-0 flex-1 flex-col">
          {LAYERS.map((l) => <LayerRow key={l.name} layer={l} />)}
        </ul>
        <div className="flex w-[24px] shrink-0 flex-col items-center bg-[#4a4a4a] text-[#999]">
          <Chevron d="M2 6l5-4 5 4" className="mt-[11px]" />
          <div className="h-[355px]" />
          <div className="h-[298px] w-[18px] rounded-[3px] bg-[#696969]" />
          <Chevron d="M2 2l5 4 5-4" className="mt-auto mb-[10px]" />
        </div>
      </div>
      <div className="flex h-[37px] shrink-0 items-center justify-end gap-[22px] border-t-2 border-[#404040] pr-[41px] text-[#a0a0a0]">
        <Link2 size={22} />
        <button type="button" className="text-[18px] italic">fx</button>
        <svg width="19" height="15"><path fill="currentColor" fillRule="evenodd" d="M0 0h19v15H0zM9 3a4 4 0 1 0 1 0z" /></svg>
        <AdjustIcon />
        <svg width="18" height="15" fill="currentColor"><path d="M0 0h8l2 3h8v12H0z" /></svg>
        <SquarePlus size={20} />
        <Trash2 size={19} />
      </div>
    </section>
  );
}

export default function App() {
  return (
    <div className="flex h-screen flex-col overflow-hidden border-r-2 border-b-2 border-[#333] bg-[#535353] font-['Noto_Sans',sans-serif]">
      <MenuBar />
      <OptionsBar />
      <div className="flex min-h-0 flex-1">
        <Toolbar />
        <Document />
        <IconStrip />
        <aside className="flex w-[426px] shrink-0 flex-col">
          <div className="flex h-[17px] shrink-0 items-center justify-end bg-[#434343] pr-[8px] text-[#ddd]">
            <svg width="11" height="8" fill="none" stroke="currentColor" strokeWidth="1.5"><path d="M1 1l4 3-4 3M6 1l4 3-4 3" /></svg>
          </div>
          <ColorPanel />
          <PropertiesPanel />
          <LayersPanel />
        </aside>
      </div>
    </div>
  );
}
